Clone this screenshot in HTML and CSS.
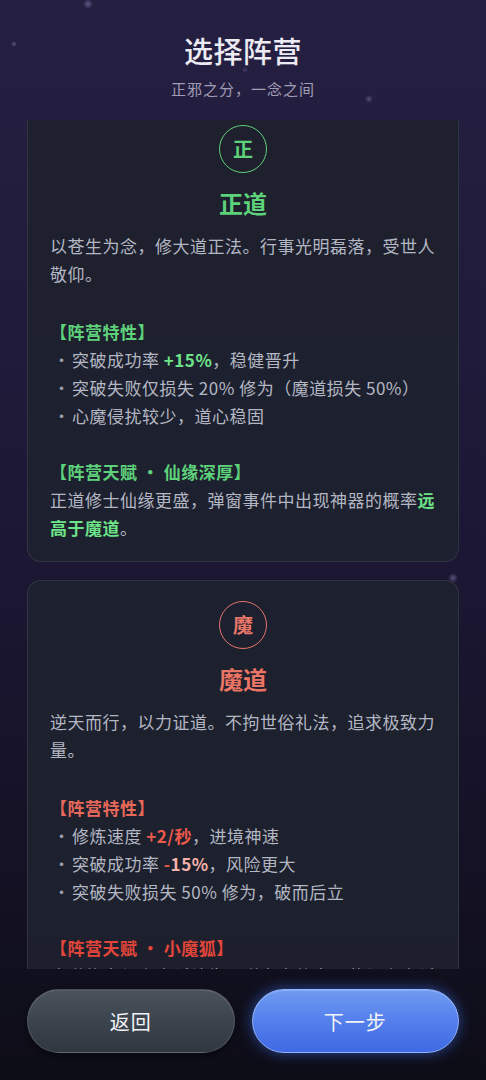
FILE: index.html
```html
<!DOCTYPE html>
<html lang="zh-CN">
<head>
<meta charset="utf-8">
<title>选择阵营</title>
<link rel="stylesheet" href="styles.css">
</head>
<body>
<div class="app">
  <header class="header">
    <h1 class="title">选择阵营</h1>
    <p class="subtitle">正邪之分，一念之间</p>
  </header>

  <main class="scroll">
    <div class="list">
      <section class="card good">
        <div class="badge">正</div>
        <h2 class="name">正道</h2>
        <p class="desc">以苍生为念，修大道正法。行事光明磊落，受世人敬仰。</p>
        <h3 class="sec-title">【阵营特性】</h3>
        <ul class="traits">
          <li><span class="dot">·</span><span>突破成功率 <b class="hl">+15%</b>，稳健晋升</span></li>
          <li><span class="dot">·</span><span>突破失败仅损失 20% 修为（魔道损失 50%）</span></li>
          <li><span class="dot">·</span><span>心魔侵扰较少，道心稳固</span></li>
        </ul>
        <h3 class="sec-title talent">【阵营天赋 · 仙缘深厚】</h3>
        <p class="talent-desc">正道修士仙缘更盛，弹窗事件中出现神器的概率<b class="hl">远高于魔道</b>。</p>
      </section>

      <section class="card evil">
        <div class="badge">魔</div>
        <h2 class="name">魔道</h2>
        <p class="desc">逆天而行，以力证道。不拘世俗礼法，追求极致力量。</p>
        <h3 class="sec-title">【阵营特性】</h3>
        <ul class="traits">
          <li><span class="dot">·</span><span>修炼速度 <b class="hl">+2/秒</b>，进境神速</span></li>
          <li><span class="dot">·</span><span>突破成功率 <b class="hl"><span class="minus">-</span><span class="soft">15%</span></b>，风险更大</span></li>
          <li><span class="dot">·</span><span>突破失败损失 50% 修为，破而后立</span></li>
        </ul>
        <h3 class="sec-title talent">【阵营天赋 · 小魔狐】</h3>
        <p class="talent-desc">魔道修士与小魔狐结缘，弹窗事件中可获得小魔狐的额外助力。</p>
      </section>
    </div>
  </main>

  <footer class="footer">
    <button class="btn back">返回</button>
    <button class="btn next">下一步</button>
  </footer>
</div>
</body>
</html>
```

FILE: styles.css
```css
* { box-sizing: border-box; }

html, body {
  margin: 0;
  padding: 0;
}

body {
  width: 486px;
  height: 1080px;
  overflow: hidden;
  font-family: "Noto Sans CJK SC", "Noto Sans", sans-serif;
  color: #b6bac6;
  background:
    radial-gradient(circle at 88px 4px, rgba(200,190,255,0.35) 0, rgba(200,190,255,0) 5px),
    radial-gradient(circle at 14px 44px, rgba(200,190,255,0.35) 0, rgba(200,190,255,0) 3px),
    radial-gradient(circle at 245px 70px, rgba(200,190,255,0.2) 0, rgba(200,190,255,0) 3px),
    radial-gradient(circle at 369px 99px, rgba(200,190,255,0.3) 0, rgba(200,190,255,0) 4px),
    radial-gradient(circle at 453px 578px, rgba(200,190,255,0.35) 0, rgba(200,190,255,0) 5px),
    radial-gradient(circle at 335px 1002px, rgba(200,190,255,0.25) 0, rgba(200,190,255,0) 5px),
    linear-gradient(180deg, #252042 0%, #201b3a 30%, #1b1632 55%, #141224 80%, #0d0d17 100%);
}

.app {
  height: 1080px;
  display: flex;
  flex-direction: column;
}

.header {
  padding-top: 32px;
  text-align: center;
  height: 120px;
  flex: none;
}

.title {
  margin: 0;
  font-size: 29px;
  line-height: 36px;
  font-weight: 500;
  color: #ecebf3;
  letter-spacing: 0.5px;
}

.subtitle {
  margin: 11px 0 0;
  font-size: 15px;
  line-height: 20px;
  color: #a19db5;
  letter-spacing: 1px;
}

.scroll {
  flex: 1;
  min-height: 0;
  overflow: hidden;
  margin: 0 27px;
}

.list {
  margin-top: -16px;
  display: flex;
  flex-direction: column;
  gap: 18px;
}

.card {
  background: rgba(30, 33, 46, 0.94);
  border: 1px solid rgba(255, 255, 255, 0.09);
  border-radius: 14px;
  padding: 20px 22px 19px;
  font-size: 17px;
  line-height: 28px;
  letter-spacing: 0.5px;
}

.badge {
  width: 48px;
  height: 48px;
  margin: 0 auto;
  border-radius: 50%;
  border: 1.5px solid currentColor;
  display: flex;
  align-items: center;
  justify-content: center;
  font-size: 20px;
  font-weight: 700;
  letter-spacing: 0;
}

.name {
  margin: 15px 0 0;
  text-align: center;
  font-size: 24px;
  line-height: 30px;
  font-weight: 700;
  letter-spacing: 0;
}

.desc {
  margin: 14px 0 0;
}

.sec-title {
  margin: 30px 0 0;
  font-size: 17px;
  line-height: 28px;
  font-weight: 700;
}

.sec-title.talent {
  margin-top: 28px;
}

.traits {
  list-style: none;
  margin: 0;
  padding: 0;
}

.traits li {
  display: flex;
}

.dot {
  width: 22px;
  flex: none;
  padding-left: 3px;
  color: #9a9eaa;
}

.talent-desc {
  margin: 0;
}

.traits li, .desc, .talent-desc { color: #b3b7c3; }
.traits .hl, .talent-desc .hl { font-weight: 700; }

.good .badge { color: #5dd27a; border-color: #62cf7d; }
.good .name, .good .sec-title { color: #5dd27a; }
.good .hl { color: #6ee489; }

.evil .badge { color: #e8776a; border-color: #e4756a; }
.evil .name { color: #ec7566; }
.evil .sec-title { color: #e8685a; }
.evil .sec-title.talent { color: #e2453a; }
.evil .hl { color: #ec5a4c; }
.evil .minus { color: #ec5a4c; }
.evil .soft { color: #f4b2aa; }

.footer {
  flex: none;
  display: flex;
  gap: 17px;
  padding: 20px 27px 27px;
}

.btn {
  flex: 1;
  height: 64px;
  border-radius: 32px;
  font-family: "Noto Sans CJK SC", "Noto Sans", sans-serif;
  font-size: 20px;
  color: #f2f3f7;
  cursor: pointer;
  letter-spacing: 1px;
}

.back {
  background: linear-gradient(180deg, #4a525d 0%, #3a424c 55%, #30373f 100%);
  border: 1px solid rgba(255, 255, 255, 0.12);
  box-shadow: 0 3px 6px rgba(0, 0, 0, 0.45), inset 0 1px 0 rgba(255,255,255,0.08);
}

.next {
  background: linear-gradient(180deg, #6f9bf1 0%, #547fec 50%, #3f69e3 100%);
  border: 1px solid #8fb3ff;
  box-shadow: 0 0 14px rgba(70, 120, 255, 0.55), inset 0 1px 0 rgba(255,255,255,0.2);
}
```
